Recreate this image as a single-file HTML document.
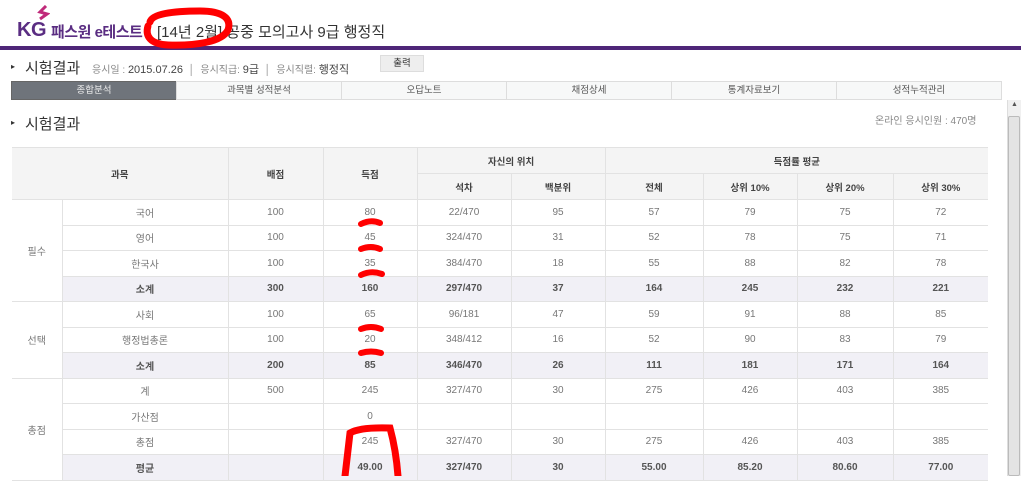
<!DOCTYPE html>
<html><head><meta charset="utf-8"><style>
*{margin:0;padding:0;box-sizing:border-box}
body{width:1021px;height:476px;overflow:hidden;background:#fff;font-family:"Liberation Sans","Noto Sans CJK KR","NanumGothic",sans-serif;position:relative;color:#444}
.a{position:absolute;white-space:nowrap}
table{position:absolute;left:12px;top:147px;width:976px;border-collapse:collapse;table-layout:fixed;font-size:10px;color:#777}
td,th{border:1px solid #e2e2e2;text-align:center;font-weight:normal;padding:0}
th{background:#f4f4f4;color:#444;font-weight:bold;font-size:9.5px}
tr{height:25.5px}
.s td{background:#f1f0f6;font-weight:bold;color:#555}
table tr td:first-child,table tr th:first-child{border-left:none}
table tr td:last-child,table tr th:last-child{border-right:none}
.tab{position:absolute;top:81px;height:19px;border:1px solid #ddd;background:#f7f8f8;font-size:9.5px;color:#555;text-align:center;line-height:17px}
</style></head><body>
<div class="a" style="left:17px;top:19px;font-size:20px;font-weight:bold;color:#5a2d82;letter-spacing:-0.5px">KG</div>
<svg class="a" style="left:36px;top:5px" width="14" height="16"><path d="M10 1 L4 7 L11 9 L4 14" fill="none" stroke="#c02a7a" stroke-width="3"/></svg>
<div class="a" style="left:51px;top:21px;font-size:15px;font-weight:bold;color:#5a2d82;letter-spacing:-0.5px">패스원 e테스트</div>
<div class="a" style="left:157px;top:21px;font-size:15px;color:#333">[14년 2월] 공중 모의고사 9급 행정직</div>
<div class="a" style="left:0;top:46px;width:1021px;height:4px;background:#4e2678"></div>
<div class="a" style="left:11px;top:62px;font-size:8px;color:#333">▸</div>
<div class="a" style="left:25px;top:57px;font-size:15px;color:#333">시험결과</div>
<div class="a" style="left:92px;top:61px;font-size:10px;color:#888">응시일 : <span style="color:#444;font-size:11px">2015.07.26</span> &nbsp;│ &nbsp;응시직급: <span style="color:#444;font-size:11px">9급</span> &nbsp;│ &nbsp;응시직렬: <span style="color:#444;font-size:11px">행정직</span></div>
<div class="a" style="left:380px;top:55px;width:44px;height:17px;background:#eee;border:1px solid #ddd;font-size:9.5px;text-align:center;line-height:15px;color:#333">출력</div>
<div class="tab" style="left:11px;width:166px;background:#6f747b;color:#eee;border-color:#666">종합분석</div>
<div class="tab" style="left:176px;width:166px">과목별 성적분석</div>
<div class="tab" style="left:341px;width:166px">오답노트</div>
<div class="tab" style="left:506px;width:166px">채점상세</div>
<div class="tab" style="left:671px;width:166px">통계자료보기</div>
<div class="tab" style="left:836px;width:166px">성적누적관리</div>
<div class="a" style="left:11px;top:118px;font-size:8px;color:#333">▸</div>
<div class="a" style="left:25px;top:113px;font-size:15px;color:#333">시험결과</div>
<div class="a" style="left:875px;top:112px;font-size:10px;color:#888">온라인 응시인원 : 470명</div>
<div class="a" style="left:1007px;top:100px;width:14px;height:376px;background:#f0f0f0;border-left:1px solid #ddd"></div>
<div class="a" style="left:1008px;top:116px;width:12px;height:360px;background:#e4e4e4;border:1px solid #bbb;border-radius:2px"></div>
<div class="a" style="left:1011px;top:101px;font-size:7px;color:#555">▲</div>
<table>
<colgroup><col style="width:50px"><col style="width:166px"><col style="width:95px"><col style="width:94px"><col style="width:94px"><col style="width:94px"><col style="width:98px"><col style="width:94px"><col style="width:96px"><col style="width:95px"></colgroup>
<tr style="height:26px"><th colspan="2" rowspan="2">과목</th><th rowspan="2">배점</th><th rowspan="2">득점</th><th colspan="2">자신의 위치</th><th colspan="4">득점률 평균</th></tr>
<tr style="height:26px"><th>석차</th><th>백분위</th><th>전체</th><th>상위 10%</th><th>상위 20%</th><th>상위 30%</th></tr>
<tr><td rowspan="4">필수</td><td>국어</td><td>100</td><td>80</td><td>22/470</td><td>95</td><td>57</td><td>79</td><td>75</td><td>72</td></tr>
<tr><td>영어</td><td>100</td><td>45</td><td>324/470</td><td>31</td><td>52</td><td>78</td><td>75</td><td>71</td></tr>
<tr><td>한국사</td><td>100</td><td>35</td><td>384/470</td><td>18</td><td>55</td><td>88</td><td>82</td><td>78</td></tr>
<tr class="s"><td>소계</td><td>300</td><td>160</td><td>297/470</td><td>37</td><td>164</td><td>245</td><td>232</td><td>221</td></tr>
<tr><td rowspan="3">선택</td><td>사회</td><td>100</td><td>65</td><td>96/181</td><td>47</td><td>59</td><td>91</td><td>88</td><td>85</td></tr>
<tr><td>행정법총론</td><td>100</td><td>20</td><td>348/412</td><td>16</td><td>52</td><td>90</td><td>83</td><td>79</td></tr>
<tr class="s"><td>소계</td><td>200</td><td>85</td><td>346/470</td><td>26</td><td>111</td><td>181</td><td>171</td><td>164</td></tr>
<tr><td rowspan="4">총점</td><td>계</td><td>500</td><td>245</td><td>327/470</td><td>30</td><td>275</td><td>426</td><td>403</td><td>385</td></tr>
<tr><td>가산점</td><td></td><td>0</td><td></td><td></td><td></td><td></td><td></td><td></td></tr>
<tr><td>총점</td><td></td><td>245</td><td>327/470</td><td>30</td><td>275</td><td>426</td><td>403</td><td>385</td></tr>
<tr class="s"><td>평균</td><td></td><td>49.00</td><td>327/470</td><td>30</td><td>55.00</td><td>85.20</td><td>80.60</td><td>77.00</td></tr>
</table>
<svg class="a" style="left:0;top:0" width="1021" height="476">
<g fill="none" stroke="#f00" stroke-linecap="round">
<path d="M150 22 C152 14 172 11 200 11 C222 11 232 18 228 30 C222 42 195 46 168 45 C150 44 145 36 148 26" stroke-width="7"/>
<path d="M361 224 Q371 219 380 223" stroke-width="6"/>
<path d="M361 249 Q371 245 380 249" stroke-width="6"/>
<path d="M361 275 Q371 270 382 274" stroke-width="6"/>
<path d="M361 329 Q371 325 381 329" stroke-width="6"/>
<path d="M361 353 Q371 350 381 353" stroke-width="6"/>
<path d="M345 476 L350 433 Q360 427 390 428 Q396 450 398 476" stroke-width="7"/>
</g></svg>
</body></html>
